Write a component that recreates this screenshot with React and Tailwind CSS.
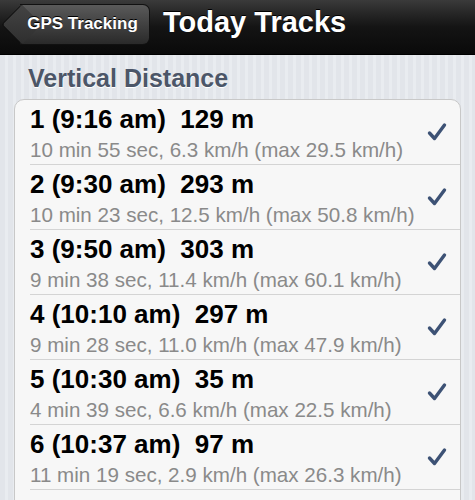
import React from "react";

const tracks = [
  { title: "1 (9:16 am)  129 m", sub: "10 min 55 sec, 6.3 km/h (max 29.5 km/h)" },
  { title: "2 (9:30 am)  293 m", sub: "10 min 23 sec, 12.5 km/h (max 50.8 km/h)" },
  { title: "3 (9:50 am)  303 m", sub: "9 min 38 sec, 11.4 km/h (max 60.1 km/h)" },
  { title: "4 (10:10 am)  297 m", sub: "9 min 28 sec, 11.0 km/h (max 47.9 km/h)" },
  { title: "5 (10:30 am)  35 m", sub: "4 min 39 sec, 6.6 km/h (max 22.5 km/h)" },
  { title: "6 (10:37 am)  97 m", sub: "11 min 19 sec, 2.9 km/h (max 26.3 km/h)" },
];

const Check = () => (
  <svg width="20" height="20" viewBox="0 0 20 20">
    <path d="M2.5 11 L7.5 16.5 L17.5 3" fill="none" stroke="#3d5275" strokeWidth="3.4" strokeLinecap="round" strokeLinejoin="round" />
  </svg>
);

const App = () => {
  return (
    <div className="w-[475px] h-[500px] overflow-hidden bg-[repeating-linear-gradient(90deg,#e2e5ea_0px,#e2e5ea_5px,#e9ecf0_5px,#e9ecf0_8px)] font-['Liberation_Sans',Arial,sans-serif]">
      {/* nav bar */}
      <div className="h-[55px] flex items-center bg-gradient-to-b from-[#3a3a3a] via-[#141414] to-[#0a0a0a] border-b border-[#000]">
        <div className="relative ml-[20px] h-[41px] w-[130px] mt-[-6px] flex items-center justify-center rounded-r-[7px] bg-gradient-to-b from-[#5a5a5a] to-[#2a2a2a] border border-[#111] border-l-0">
          <div className="absolute left-[-13px] top-[5px] w-[29px] h-[29px] rotate-45 rounded-bl-[4px] bg-gradient-to-br from-[#444] to-[#2e2e2e] border-l border-b border-[#111]"></div>
          <span className="relative text-white font-bold text-[17px] ml-[-4px] [text-shadow:0_-1px_0_#000]">GPS Tracking</span>
        </div>
        <div className="ml-[13px] mt-[-8px] text-white font-bold text-[29px] [text-shadow:0_-1px_0_#000]">Today Tracks</div>
      </div>

      <div className="px-[14px]">
        <div className="pl-[14px] pt-[8px] h-[44px] text-[25px] leading-[30px] font-bold text-[#4c5668] [text-shadow:0_1px_0_#fff]">Vertical Distance</div>
        <div className="bg-[#f7f7f7] border border-[#c8c8c8] rounded-[10px] w-[447px] pb-[30px]">
          {tracks.map((t, i) => (
            <div key={i} className="pl-[15px] h-[65px] flex">
              <div className="flex-1 h-full flex border-b border-[#d4d4d4]">
                <div className="flex-1 pt-[5px]">
                  <div className="text-[26px] font-bold text-black leading-[29px] whitespace-pre">{t.title}</div>
                  <div className="text-[20.6px] text-[#8a8a8a] leading-[24px] mt-[4px] whitespace-nowrap">{t.sub}</div>
                </div>
                <div className="w-[33px] flex items-center">
                  <Check />
                </div>
              </div>
            </div>
          ))}
        </div>
      </div>
    </div>
  );
};

export default App;
